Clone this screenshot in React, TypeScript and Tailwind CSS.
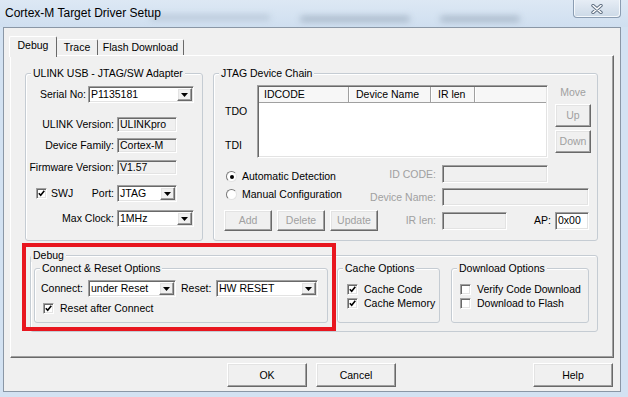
import type { ReactNode } from 'react';

const sunken = 'border border-[#a0a0a0] border-r-white border-b-white shadow-[inset_1px_1px_0_#696969,inset_-1px_-1px_0_#e3e3e3]';
const raised = 'border border-white border-r-[#696969] border-b-[#696969] shadow-[inset_-1px_-1px_0_#a0a0a0,inset_1px_1px_0_#e3e3e3] bg-[#f0f0f0]';
const dim = 'text-[#a0a0a0]';

function Arrow() {
    return (
        <svg width="7" height="4" viewBox="0 0 7 4">
            <path d="M0 0h7L3.5 4z" fill="#000" />
        </svg>
    );
}

function Combo({ value, className }: { value: string; className: string }) {
    return (
        <div className={`h-[17px] flex bg-white p-[1px] ${sunken} ${className}`}>
            <span className="flex-1 pl-[1px] leading-[13px] whitespace-nowrap overflow-hidden">{value}</span>
            <span className={`w-[15px] h-full flex items-center justify-center ${raised}`}>
                <Arrow />
            </span>
        </div>
    );
}

function Field({ value, className, white }: { value?: string; className: string; white?: boolean }) {
    return (
        <div className={`flex items-center pl-[2px] whitespace-nowrap ${white ? 'bg-white' : 'bg-[#f0f0f0]'} ${sunken} ${className}`}>
            {value}
        </div>
    );
}

function Check({ on }: { on?: boolean }) {
    return (
        <span className={`w-[11px] h-[11px] shrink-0 flex items-center justify-center bg-white ${sunken}`}>
            {on && (
                <svg width="7" height="7" viewBox="0 0 7 7">
                    <path d="M0.8 3.2l1.9 2 3.6-4.4" fill="none" stroke="#000" strokeWidth="1.6" />
                </svg>
            )}
        </span>
    );
}

function Radio({ on }: { on?: boolean }) {
    return (
        <span className="w-[11px] h-[11px] shrink-0 rounded-full bg-white border border-[#7a7a7a] border-r-[#e3e3e3] border-b-[#e3e3e3] flex items-center justify-center">
            {on && <span className="w-[4px] h-[4px] rounded-full bg-black" />}
        </span>
    );
}

function Btn({ children, className }: { children: ReactNode; className: string }) {
    return <div className={`flex items-center justify-center ${raised} ${className}`}>{children}</div>;
}

function Group({ title, className, children, legend = 'ml-[5px]' }: { title: string; className: string; children?: ReactNode; legend?: string }) {
    return (
        <fieldset className={`border border-[#c5ccd3] rounded-[3px] shadow-[inset_1px_1px_0_#fff] min-w-0 shrink-0 ${className}`}>
            <legend className={`px-[2px] leading-[13px] bg-[#f0f0f0] whitespace-nowrap ${legend}`}>{title}</legend>
            {children}
        </fieldset>
    );
}

function TitleBar() {
    return (
        <div className="relative h-[27px] shrink-0 flex items-center pl-[5px] text-[12px] bg-linear-to-b from-[#dde8f4] to-[#cfdff0]">
            <div className="absolute left-[150px] top-[15px] w-[120px] h-[5px] rounded-full bg-[#b7c6d6] blur-[3px]" />
            <div className="absolute left-[300px] top-[16px] w-[110px] h-[6px] rounded-full bg-[#a9b9ca] blur-[3px]" />
            <div className="absolute left-[440px] top-[16px] w-[80px] h-[6px] rounded-full bg-[#a9b9ca] blur-[3px]" />
            <span className="relative">Cortex-M Target Driver Setup</span>
            <div className="absolute right-[7px] top-0 w-[48px] h-[18px] rounded-b-[4px] border border-t-0 border-[#8b9db2] bg-linear-to-b from-[#e6edf5] to-[#ccd9e7] shadow-[inset_1px_0_0_#f4f8fc,inset_-1px_-1px_0_#f4f8fc] flex items-center justify-center">
                <svg width="12" height="10" viewBox="0 0 12 10">
                    <path d="M2 1.5l8 7M10 1.5l-8 7" stroke="#5d6d80" strokeWidth="3.4" strokeLinecap="round" />
                    <path d="M2 1.5l8 7M10 1.5l-8 7" stroke="#fff" strokeWidth="1.6" strokeLinecap="round" />
                </svg>
            </div>
        </div>
    );
}

function Tabs() {
    return (
        <div className="flex items-end h-[19px] -ml-px shrink-0">
            <div className="relative z-10 h-[21px] -mb-[2px] w-[48px] bg-[#f0f0f0] border-l border-t border-white border-r border-r-[#696969] rounded-t-[2px] flex justify-center pt-[2px]">
                Debug
            </div>
            <div className="h-[16px] w-[41px] border-t border-white border-r border-r-[#696969] rounded-t-[2px] flex justify-center pt-[1px]">
                Trace
            </div>
            <div className="h-[16px] w-[86px] border-t border-white border-r border-r-[#696969] rounded-t-[2px] flex justify-center pt-[1px]">
                Flash Download
            </div>
        </div>
    );
}

function Ulink() {
    return (
        <Group title="ULINK USB - JTAG/SW Adapter" className="w-[178px] h-[174px]">
            <div className="flex items-center h-[17px] mt-[6px]">
                <span className="w-[60px] text-right whitespace-nowrap">Serial No:</span>
                <Combo value="P1135181" className="ml-[2px] w-[106px]" />
            </div>
            <div className="flex items-center h-[15px] mt-[14px]">
                <span className="w-[88px] text-right whitespace-nowrap">ULINK Version:</span>
                <Field value="ULINKpro" className="ml-[3px] w-[60px] h-[15px]" />
            </div>
            <div className="flex items-center h-[15px] mt-[6px]">
                <span className="w-[88px] text-right whitespace-nowrap">Device Family:</span>
                <Field value="Cortex-M" className="ml-[3px] w-[60px] h-[15px]" />
            </div>
            <div className="flex items-center h-[15px] mt-[7px]">
                <span className="w-[88px] text-right whitespace-nowrap">Firmware Version:</span>
                <Field value="V1.57" className="ml-[3px] w-[60px] h-[15px]" />
            </div>
            <div className="flex items-center h-[17px] mt-[10px]">
                <div className="w-[88px] flex items-center pl-[10px]">
                    <Check on />
                    <span className="ml-[4px]">SWJ</span>
                    <span className="ml-auto">Port:</span>
                </div>
                <Combo value="JTAG" className="ml-[3px] w-[60px]" />
            </div>
            <div className="flex items-center h-[17px] mt-[8px]">
                <span className="w-[88px] text-right">Max Clock:</span>
                <Combo value="1MHz" className="ml-[3px] w-[77px]" />
            </div>
        </Group>
    );
}

function Jtag() {
    return (
        <Group title="JTAG Device Chain" className="w-[385px] h-[174px]">
            <div className="flex h-[73px] mt-[5px]">
                <div className="w-[43px] pl-[11px] flex flex-col">
                    <span className="mt-[20px]">TDO</span>
                    <span className="mt-[21px]">TDI</span>
                </div>
                <div className={`w-[291px] h-[73px] bg-white p-[1px] ${sunken}`}>
                    <div className="flex h-[16px] bg-[#f7f7f7] border-b border-[#a0a0a0]">
                        <span className="w-[90px] pl-[5px] flex items-center border-r border-[#a0a0a0] shadow-[1px_0_0_#fff]">IDCODE</span>
                        <span className="w-[82px] pl-[7px] flex items-center border-r border-[#a0a0a0] shadow-[1px_0_0_#fff]">Device Name</span>
                        <span className="w-[44px] pl-[7px] flex items-center border-r border-[#a0a0a0] shadow-[1px_0_0_#fff]">IR len</span>
                        <span className="flex-1" />
                    </div>
                </div>
                <div className="ml-[7px] w-[36px] flex flex-col items-center">
                    <span className={`${dim} pt-[1px]`}>Move</span>
                    <Btn className={`mt-[5px] w-[36px] h-[23px] ${dim}`}>Up</Btn>
                    <Btn className={`mt-[3px] w-[36px] h-[23px] ${dim}`}>Down</Btn>
                </div>
            </div>
            <div className="flex h-[41px] mt-[7px]">
                <div className="w-[140px] pl-[12px] flex flex-col">
                    <div className="flex items-center h-[13px] mt-[5px]">
                        <Radio on />
                        <span className="ml-[5px] whitespace-nowrap">Automatic Detection</span>
                    </div>
                    <div className="flex items-center h-[13px] mt-[5px]">
                        <Radio />
                        <span className="ml-[5px] whitespace-nowrap">Manual Configuration</span>
                    </div>
                </div>
                <div className="flex flex-col">
                    <div className="flex items-center h-[18px]">
                        <span className={`w-[82px] flex justify-end whitespace-nowrap ${dim}`}>ID CODE:</span>
                        <Field className="ml-[6px] w-[106px] h-[18px]" />
                    </div>
                    <div className="flex items-center h-[18px] mt-[5px]">
                        <span className={`w-[82px] flex justify-end whitespace-nowrap ${dim}`}>Device Name:</span>
                        <Field className="ml-[6px] w-[147px] h-[18px]" />
                    </div>
                </div>
            </div>
            <div className="flex items-center h-[21px] mt-[4px] pl-[10px]">
                <div className="flex gap-[5px]">
                    <Btn className={`w-[48px] h-[21px] ${dim}`}>Add</Btn>
                    <Btn className={`w-[48px] h-[21px] ${dim}`}>Delete</Btn>
                    <Btn className={`w-[48px] h-[21px] ${dim}`}>Update</Btn>
                </div>
                <span className={`w-[58px] flex justify-end ${dim}`}>IR len:</span>
                <Field className="ml-[6px] w-[65px] h-[18px]" />
                <span className="w-[44px] flex justify-end">AP:</span>
                <Field white value="0x00" className="ml-[4px] w-[34px] h-[18px]" />
            </div>
        </Group>
    );
}

function DebugGroup() {
    return (
        <Group title="Debug" legend="ml-0" className="mt-[8px] ml-[5px] w-[568px] h-[83px]">
            <div className="flex pl-[3px]">
                <Group title="Connect & Reset Options" className="w-[294px] h-[61px]">
                    <div className="flex items-center h-[17px] mt-[5px] pl-[6px]">
                        <span className="w-[45px]">Connect:</span>
                        <Combo value="under Reset" className="ml-[2px] w-[88px]" />
                        <span className="ml-[5px] w-[32px]">Reset:</span>
                        <Combo value="HW RESET" className="ml-[3px] w-[102px]" />
                    </div>
                    <div className="flex items-center h-[13px] mt-[5px] pl-[8px]">
                        <Check on />
                        <span className="ml-[6px]">Reset after Connect</span>
                    </div>
                </Group>
                <Group title="Cache Options" className="ml-[9px] w-[103px] h-[61px]">
                    <div className="flex items-center h-[14px] mt-[7px] pl-[9px]">
                        <Check on />
                        <span className="ml-[6px] whitespace-nowrap">Cache Code</span>
                    </div>
                    <div className="flex items-center h-[14px] pl-[9px]">
                        <Check on />
                        <span className="ml-[6px] whitespace-nowrap">Cache Memory</span>
                    </div>
                </Group>
                <Group title="Download Options" className="ml-[11px] w-[138px] h-[61px]">
                    <div className="flex items-center h-[14px] mt-[7px] pl-[8px]">
                        <Check />
                        <span className="ml-[6px] whitespace-nowrap">Verify Code Download</span>
                    </div>
                    <div className="flex items-center h-[14px] pl-[8px]">
                        <Check />
                        <span className="ml-[6px] whitespace-nowrap">Download to Flash</span>
                    </div>
                </Group>
            </div>
        </Group>
    );
}

export default function App() {
    return (
        <div className="w-[628px] h-[397px] overflow-hidden flex flex-col bg-[#d3e2f2] font-['Liberation_Sans',Arial,sans-serif] text-[10.5px] leading-[13px] text-black">
            <TitleBar />
            <div className="ml-[3px] mr-[7px] h-[365px] shrink-0 border border-[#8a97a6] bg-[#f0f0f0] flex flex-col pt-[8px] pl-[6px] pr-[7px]">
                <Tabs />
                <div className="relative w-[604px] h-[303px] shrink-0 border border-white border-r-[#696969] border-b-[#696969] shadow-[inset_-1px_-1px_0_#a0a0a0] pt-[11px] pl-[14px]">
                    <div className="flex gap-[10px] h-[174px]">
                        <Ulink />
                        <Jtag />
                    </div>
                    <DebugGroup />
                    <div className="absolute left-[11px] top-[187px] w-[314px] h-[88px] border-[4px] border-[#e8161f]" />
                </div>
                <div className="flex mt-[5px] h-[24px]">
                    <Btn className="ml-[217px] w-[80px] h-[24px]">OK</Btn>
                    <Btn className="ml-[9px] w-[80px] h-[24px]">Cancel</Btn>
                    <Btn className="ml-auto w-[80px] h-[24px]">Help</Btn>
                </div>
            </div>
        </div>
    );
}
